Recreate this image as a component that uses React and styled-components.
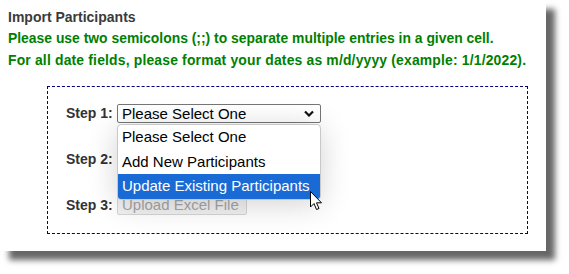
import React from 'react'
import styled, { createGlobalStyle } from 'styled-components'

const GlobalStyle = createGlobalStyle`
    html, body {
        margin: 0;
        padding: 0;
        background: #ffffff;
    }
    body {
        font-family: "Liberation Sans", Arial, sans-serif;
    }
`

const Page = styled.div`
    width: 569px;
    height: 274px;
    overflow: hidden;
`

const Card = styled.div`
    position: relative;
    width: 546px;
    height: 251px;
    box-sizing: border-box;
    padding: 7px 8px 0 8px;
    background: #ffffff;
    box-shadow: 9px 9px 6px rgba(0, 0, 0, 0.6);
`

const Title = styled.div`
    font-size: 14px;
    font-weight: bold;
    color: #3a3a3a;
    line-height: 20px;
`

const Note = styled.div`
    font-size: 13.9px;
    font-weight: bold;
    color: #008000;
    line-height: 22px;
    letter-spacing: ${p => p.$spread || 0}px;
`

const StepsBox = styled.div`
    position: relative;
    margin: 15px 0 0 39px;
    width: 481px;
    height: 148px;
    box-sizing: border-box;
    border: 1px dashed #000080;
    padding: 16px 18px;
    display: flex;
    flex-direction: column;
    gap: 26px;
`

const StepRow = styled.div`
    display: flex;
    align-items: center;
    height: 20px;
    gap: 6px;
`

const StepLabel = styled.span`
    width: 45px;
    font-size: 14px;
    font-weight: bold;
    color: #333333;
    white-space: nowrap;
`

const SelectBox = styled.div`
    width: 204px;
    height: 19px;
    box-sizing: border-box;
    border: 1px solid #767676;
    border-radius: 2px;
    display: flex;
    align-items: center;
    justify-content: space-between;
    padding: 0 6px 0 4px;
    font-size: 15px;
    color: #000;
    background: #fff;
`

const Menu = styled.div`
    position: absolute;
    left: 69px;
    top: 37px;
    width: 204px;
    box-sizing: border-box;
    border: 1px solid #c8c8c8;
    border-radius: 4px;
    background: #fff;
    overflow: hidden;
    box-shadow: 0 4px 30px rgba(0, 0, 0, 0.18);
    z-index: 2;
`

const Option = styled.div`
    height: 24.5px;
    line-height: 24px;
    padding-left: 4px;
    font-size: 15px;
    color: ${p => (p.$active ? '#ffffff' : '#000000')};
    background: ${p => (p.$active ? '#1a6ad6' : 'transparent')};
`

const UploadButton = styled.button`
    height: 20px;
    width: 130px;
    box-sizing: border-box;
    padding: 0 4px;
    border: 1px solid #d6d6d6;
    border-radius: 2px;
    background: #f2f2f2;
    color: #a6a6a6;
    font-family: "Liberation Sans", Arial, sans-serif;
    font-size: 15px;
    line-height: 18px;
    text-align: left;
`

const Cursor = styled.svg`
    position: absolute;
    left: 310px;
    top: 191px;
    z-index: 3;
`

function Chevron() {
    return (
        <svg width="10" height="7" viewBox="0 0 10 7">
            <path d="M1 1.5 L5 5.5 L9 1.5" fill="none" stroke="#111" strokeWidth="2.2" />
        </svg>
    )
}

export default function App() {
    const options = ['Please Select One', 'Add New Participants', 'Update Existing Participants']

    return (
        <Page>
            <GlobalStyle />
            <Card>
                <Title>Import Participants</Title>
                <Note>Please use two semicolons (;;) to separate multiple entries in a given cell.</Note>
                <Note $spread={0.18}>For all date fields, please format your dates as m/d/yyyy (example: 1/1/2022).</Note>
                <StepsBox>
                    <StepRow>
                        <StepLabel>Step 1:</StepLabel>
                        <SelectBox>
                            <span>Please Select One</span>
                            <Chevron />
                        </SelectBox>
                    </StepRow>
                    <StepRow>
                        <StepLabel>Step 2:</StepLabel>
                    </StepRow>
                    <StepRow>
                        <StepLabel>Step 3:</StepLabel>
                        <UploadButton disabled>Upload Excel File</UploadButton>
                    </StepRow>
                    <Menu>
                        {options.map((o, i) => (
                            <Option key={o} $active={i === 2}>{o}</Option>
                        ))}
                    </Menu>
                </StepsBox>
                <Cursor width="13" height="20" viewBox="0 0 13 20">
                    <path d="M0.5 0.5 L0.5 16 L4 12.5 L6.5 18.5 L9 17.5 L6.5 11.8 L11.5 11.8 Z" fill="#fff" stroke="#000" strokeWidth="1" strokeLinejoin="round" />
                </Cursor>
            </Card>
        </Page>
    )
}
